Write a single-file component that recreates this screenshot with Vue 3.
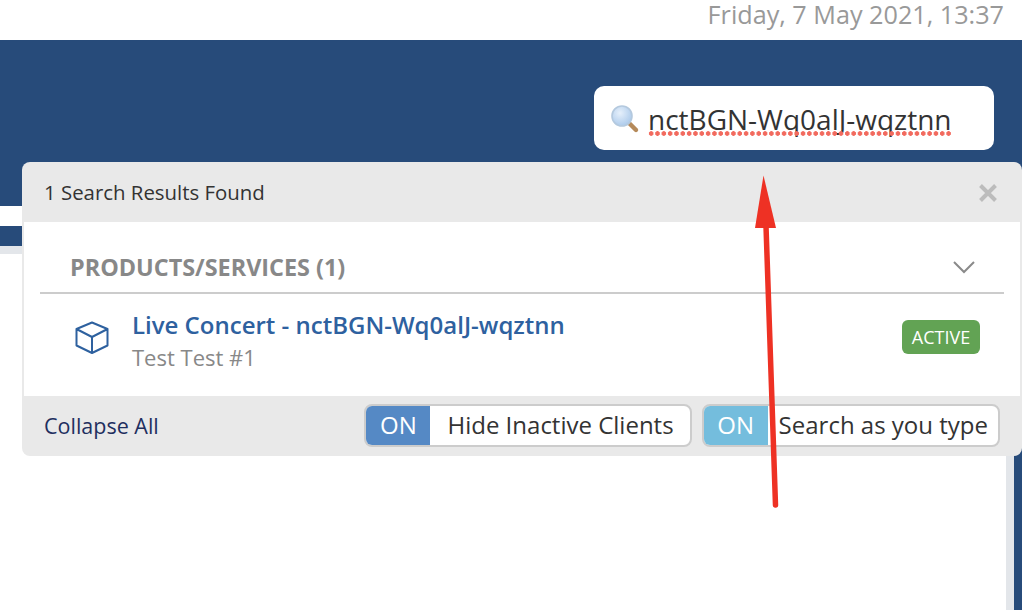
<script setup>
const toggles = [
  { label: 'Hide Inactive Clients', cls: 'blue' },
  { label: 'Search as you type', cls: 'sky' },
]
</script>

<template>
  <div class="page">
    <div class="datebar">Friday, 7 May 2021, 13:37</div>
    <header class="band">
      <div class="search">
        <svg class="lens" width="30" height="30" viewBox="0 0 30 30">
          <defs>
            <radialGradient id="glass" cx="40%" cy="35%" r="70%">
              <stop offset="0" stop-color="#e6f0fb" />
              <stop offset="1" stop-color="#a9c8ea" />
            </radialGradient>
          </defs>
          <path d="M18.500 18.500L26 26" stroke="#b58a5a" stroke-width="4.400" stroke-linecap="round" />
          <circle cx="12" cy="12" r="10" fill="url(#glass)" stroke="#b4c9de" stroke-width="1.600" />
        </svg>
        <span class="query">nctBGN-Wq0alJ-wqztnn<i class="squiggle"></i></span>
      </div>
    </header>
    <div class="gap"></div>
    <div class="strip"></div>
    <div class="strip-grey"></div>
    <div class="content">
      <div class="rail-grey"></div>
      <div class="rail-navy"></div>
    </div>

    <section class="panel">
      <div class="panel-head">
        <span>1 Search Results Found</span>
        <svg class="close" width="20" height="20" viewBox="0 0 20 20">
          <path d="M2.500 2.500L17.500 17.500M17.500 2.500L2.500 17.500" stroke="#bcbcbc" stroke-width="4" />
        </svg>
      </div>
      <div class="panel-body">
        <div class="section-title">
          <span>PRODUCTS/SERVICES (1)</span>
          <svg width="24" height="14" viewBox="0 0 24 14">
            <path d="M2 2L12 12L22 2" fill="none" stroke="#8a8a8a" stroke-width="2" />
          </svg>
        </div>
        <div class="result">
          <svg class="cube" width="34" height="34" viewBox="0 0 34 34">
            <path d="M17 1.500L32.500 8V24.500L17 32L1.500 24.500V8Z M1.500 8L17 16L32.500 8 M17 16V32" fill="none" stroke="#2e619f" stroke-width="2" stroke-linejoin="round" />
          </svg>
          <div class="result-text">
            <a class="result-title">Live Concert - nctBGN-Wq0alJ-wqztnn</a>
            <div class="result-sub">Test Test #1</div>
          </div>
          <span class="badge">ACTIVE</span>
        </div>
      </div>
      <div class="panel-foot">
        <a class="collapse">Collapse All</a>
        <div class="toggles">
          <div v-for="t in toggles" :key="t.label" class="toggle" :class="t.cls">
            <span class="on">ON</span>
            <span class="toggle-label">{{ t.label }}</span>
          </div>
        </div>
      </div>
    </section>

    <svg class="arrow" width="40" height="340" viewBox="0 0 40 340">
      <path d="M19 54L28.500 333" stroke="#ee3124" stroke-width="5.500" stroke-linecap="round" fill="none" />
      <path d="M8 56L16.500 3.500L29 56Z" fill="#ee3124" />
    </svg>
  </div>
</template>

<style scoped>
.page {
  position: relative;
  width: 1022px;
  height: 610px;
  overflow: hidden;
  background: #fff;
  font-family: "Open Sans", sans-serif;
  color: #333;
  display: flex;
  flex-direction: column;
}
.datebar {
  height: 40px;
  flex: none;
  box-sizing: border-box;
  padding: 0 18px 0 0;
  text-align: right;
  font-size: 25.2px;
  line-height: 29px;
  color: #999;
}
.band {
  height: 166px;
  flex: none;
  background: #274b7a;
  box-sizing: border-box;
  padding: 46px 28px 0 0;
  display: flex;
  justify-content: flex-end;
  align-items: flex-start;
}
.search {
  width: 400px;
  height: 64px;
  box-sizing: border-box;
  background: #fff;
  border-radius: 10px;
  display: flex;
  align-items: flex-start;
  padding: 17px 0 0 16px;
  gap: 8px;
}
.lens { flex: none; margin-top: 1px; }
.query {
  position: relative;
  font-size: 28px;
  line-height: 32px;
  color: #333;
  white-space: nowrap;
}
.squiggle {
  position: absolute;
  left: 0;
  right: 0;
  bottom: -1px;
  height: 5px;
  background-image: radial-gradient(circle at center, #f26a5e 0, #f26a5e 2px, transparent 2.600px);
  background-size: 6.330px 5px;
  background-repeat: repeat-x;
}
.gap { height: 20px; flex: none; }
.strip { height: 20px; flex: none; background: #274b7a; }
.strip-grey { height: 8px; flex: none; background: #e3e6ea; }
.content {
  flex: 1;
  display: flex;
  justify-content: flex-end;
}
.rail-grey { width: 8px; background: #e3e6ea; }
.rail-navy { width: 8px; background: #274b7a; }

.panel {
  position: absolute;
  left: 22px;
  top: 162px;
  width: 1000px;
  height: 294px;
  background: #e9e9e9;
  border-radius: 8px;
  display: flex;
  flex-direction: column;
}
.panel-head {
  height: 60px;
  flex: none;
  box-sizing: border-box;
  padding: 0 24px 0 22px;
  display: flex;
  align-items: center;
  justify-content: space-between;
  font-size: 20.400px;
  color: #333;
}
.close { margin-top: 2px; }
.panel-body {
  flex: 1;
  margin: 0 2px;
  background: #fff;
  box-sizing: border-box;
  padding: 0 16px;
}
.section-title {
  height: 72px;
  box-sizing: border-box;
  border-bottom: 2px solid #ccc;
  padding: 30px 28px 0 30px;
  display: flex;
  justify-content: space-between;
  align-items: flex-start;
  font-size: 23.400px;
  line-height: 30px;
  font-weight: 700;
  color: #888;
}
.section-title svg { margin-top: 8px; }
.result {
  display: flex;
  align-items: flex-start;
  padding: 15px 24px 0 35px;
}
.cube { flex: none; margin-top: 12px; }
.result-text { margin-left: 23px; flex: 1; }
.result-title {
  display: block;
  font-size: 24px;
  line-height: 32px;
  font-weight: 600;
  color: #2e619f;
}
.result-sub {
  font-size: 22px;
  line-height: 32px;
  color: #888;
}
.badge {
  margin-top: 11px;
  width: 78px;
  height: 34px;
  border-radius: 6px;
  background: #62a354;
  color: #fff;
  font-size: 18px;
  line-height: 34px;
  text-align: center;
}
.panel-foot {
  height: 60px;
  flex: none;
  box-sizing: border-box;
  padding: 0 22px;
  display: flex;
  align-items: center;
  justify-content: space-between;
}
.collapse {
  font-size: 21.500px;
  line-height: 28px;
  margin-top: -1px;
  color: #1f2f5f;
}
.toggles { display: flex; gap: 10px; margin-top: -1px; }
.toggle {
  height: 43px;
  box-sizing: border-box;
  border: 2px solid #ccc;
  border-radius: 8px;
  background: #fff;
  display: flex;
  overflow: hidden;
}
.toggle .on {
  width: 64px;
  text-align: center;
  color: #fff;
  font-size: 24px;
  line-height: 38px;
}
.blue .on { background: #5589c5; }
.sky .on { background: #74bddd; margin-right: 1px; }
.toggle-label {
  font-size: 24px;
  line-height: 38px;
  color: #333;
  white-space: nowrap;
}
.blue .toggle-label { padding: 0 16px 0 17px; }
.sky .toggle-label { padding: 0 10px; }
.arrow {
  position: absolute;
  left: 747px;
  top: 172px;
}
</style>
